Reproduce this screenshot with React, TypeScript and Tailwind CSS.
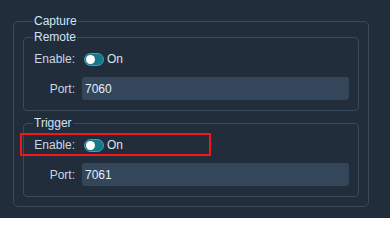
import React, { useState } from 'react';

function Toggle({ on, onChange }: { on: boolean; onChange: () => void }) {
    return (
        <button
            onClick={onChange}
            className="ml-[9px] flex items-center gap-[3px]"
        >
            <span className="relative flex h-[13px] w-[20px] items-center rounded-full border border-[#4a9fb0] bg-[#16798a]">
                <span className="ml-[1px] h-[9px] w-[9px] rounded-full bg-white" />
            </span>
            <span className="text-[12px] text-[#d6e6f5]">{on ? 'On' : 'Off'}</span>
        </button>
    );
}

function Group({
    title,
    port,
    highlight,
}: {
    title: string;
    port: string;
    highlight?: boolean;
}) {
    const [on, setOn] = useState(true);
    return (
        <fieldset className="relative rounded-[4px] border border-[#3a4a5b] pb-[10px] pl-0 pr-[9px]">
            <legend className="ml-[9px] px-[1px] text-[12px] leading-[16px] text-[#cfe4f7]">
                {title}
            </legend>
            {/* Enable row */}
            <div className="relative mt-[3px] flex h-[22px] items-center">
                <span className="w-[51px] text-right text-[12px] text-[#c9d6e3]">
                    Enable:
                </span>
                <Toggle on={on} onChange={() => setOn(!on)} />
                {highlight && (
                    <span className="pointer-events-none absolute -left-[4px] -top-[1px] h-[23px] w-[191px] border-2 border-[#f01818]" />
                )}
            </div>
            {/* Port row */}
            <div className="mt-[7px] flex h-[23px] items-center">
                <span className="w-[51px] text-right text-[12px] text-[#c9d6e3]">
                    Port:
                </span>
                <input
                    defaultValue={port}
                    className="ml-[7px] h-[23px] flex-1 rounded-[3px] bg-[#33465a] px-[3px] text-[12px] text-[#e2eefa] outline-none"
                />
            </div>
        </fieldset>
    );
}

export default function App() {
    return (
        <div className="h-[218px] w-[390px] bg-[#212d3b] pl-[13px] pt-[13px] font-['Liberation_Sans',Arial,sans-serif]">
            <fieldset className="w-[356px] rounded-[5px] border border-[#3a4a5b] pb-[9px] pl-[9px] pr-[9px]">
                <legend className="ml-[10px] px-[1px] text-[12px] leading-[16px] text-[#cfe4f7]">
                    Capture
                </legend>
                <div className="flex flex-col gap-[4px]">
                    <Group title="Remote" port="7060" />
                    <Group title="Trigger" port="7061" highlight />
                </div>
            </fieldset>
        </div>
    );
}
